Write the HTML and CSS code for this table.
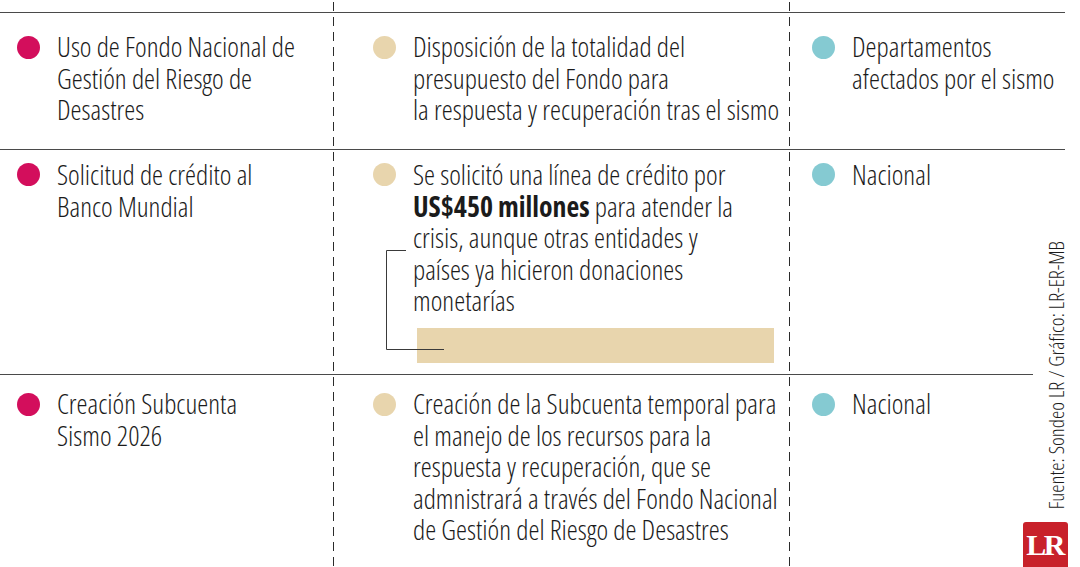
FILE: index.html
```html
<!DOCTYPE html>
<html lang="es">
<head>
<meta charset="utf-8">
<link rel="stylesheet" href="styles.css">
</head>
<body>
<div class="page">
  <div class="table">
    <div class="row r1">
      <div class="cell c1"><span class="dot pink"></span><p class="txt">Uso de Fondo Nacional de<br>Gestión del Riesgo de<br>Desastres</p></div>
      <div class="cell c2"><span class="dot beige"></span><p class="txt">Disposición de la totalidad del<br>presupuesto del Fondo para<br>la respuesta y recuperación tras el sismo</p></div>
      <div class="cell c3"><span class="dot teal"></span><p class="txt">Departamentos<br>afectados por el sismo</p></div>
    </div>
    <div class="row r2">
      <div class="cell c1"><span class="dot pink"></span><p class="txt">Solicitud de crédito al<br>Banco Mundial</p></div>
      <div class="cell c2 bracketed">
        <span class="dot beige"></span>
        <div class="body">
          <p class="txt">Se solicitó una línea de crédito por<br><strong>US$450 millones</strong> para atender la<br>crisis, aunque otras entidades y<br>países ya hicieron donaciones<br>monetarías</p>
          <div class="bar"></div>
        </div>
        <svg class="bracket" width="60" height="100" viewBox="0 0 60 100"><path d="M20 0.5H0.5V99.5H58" fill="none" stroke="#3a3a3a" stroke-width="1"/></svg>
      </div>
      <div class="cell c3"><span class="dot teal"></span><p class="txt">Nacional</p></div>
    </div>
    <div class="row r3">
      <div class="cell c1"><span class="dot pink"></span><p class="txt">Creación Subcuenta<br>Sismo 2026</p></div>
      <div class="cell c2"><span class="dot beige"></span><p class="txt">Creación de la Subcuenta temporal para<br>el manejo de los recursos para la<br>respuesta y recuperación, que se<br>admnistrará a través del Fondo Nacional<br>de Gestión del Riesgo de Desastres</p></div>
      <div class="cell c3"><span class="dot teal"></span><p class="txt">Nacional</p></div>
    </div>
  </div>
  <p class="source">Fuente: Sondeo LR / Gráfico: LR-ER-MB</p>
  <div class="logo">LR</div>
</div>
</body>
</html>
```
FILE: styles.css
```css
html, body {
  margin: 0;
  padding: 0;
  background: #ffffff;
}

.page {
  position: relative;
  width: 1080px;
  height: 567px;
  overflow: hidden;
  font-family: "Open Sans", "Roboto", sans-serif;
  font-stretch: condensed;
  font-weight: 300;
  font-size: 27.8px;
  line-height: 31.5px;
  color: #1b1b1b;
  background-image:
    linear-gradient(to bottom, #2b2b2b 0 9px, transparent 9px 15px),
    linear-gradient(to bottom, #2b2b2b 0 9px, transparent 9px 15px);
  background-size: 1px 15px, 1px 15px;
  background-position: 333px 2px, 789px 2px;
  background-repeat: repeat-y, repeat-y;
}

.table {
  width: 1065px;
  padding-top: 12px;
}

.row {
  display: grid;
  grid-template-columns: 333px 456px 1fr;
  border-top: 1px solid #4a4a4a;
}

.r1 { padding: 18px 0 23.5px; }
.r2 { padding: 9px 0 11px; }
.r3 { padding: 13px 0 0; margin-right: 32px; }

.cell {
  display: flex;
  align-items: flex-start;
  gap: 17px;
}

.c1 { padding-left: 17px; }
.c2 { padding-left: 40px; }
.c3 { padding-left: 23px; }

.dot {
  flex: 0 0 auto;
  width: 23px;
  height: 23px;
  border-radius: 50%;
  margin-top: 4.5px;
}

.r2 .dot { margin-top: 4px; }
.r3 .dot { margin-top: 5px; }

.pink { background: #d30e5c; }
.beige { background: #e8d5ad; }
.teal { background: #85cad2; }

.txt {
  margin: 0;
  white-space: nowrap;
}

.txt strong {
  font-weight: 700;
}

.bracketed {
  position: relative;
}

.body {
  display: flex;
  flex-direction: column;
}

.bar {
  margin: 11.5px 0 0 4px;
  width: 357px;
  height: 35px;
  background: #e8d5ad;
}

.bracket {
  position: absolute;
  left: 53px;
  top: 91px;
}

.source {
  position: absolute;
  right: 13px;
  bottom: 58px;
  margin: 0;
  writing-mode: vertical-rl;
  transform: rotate(180deg);
  font-size: 21px;
  line-height: 22px;
  color: #1b1b1b;
  white-space: nowrap;
}

.logo {
  position: absolute;
  left: 1023px;
  top: 522px;
  width: 45px;
  height: 45px;
  border-radius: 3px 3px 0 0;
  background: #c8212a;
  color: #ffffff;
  font-family: "Liberation Serif", "Times New Roman", serif;
  font-stretch: normal;
  font-weight: 700;
  font-size: 30px;
  line-height: 46px;
  letter-spacing: -2.5px;
  text-align: center;
  text-indent: -2px;
}
```
